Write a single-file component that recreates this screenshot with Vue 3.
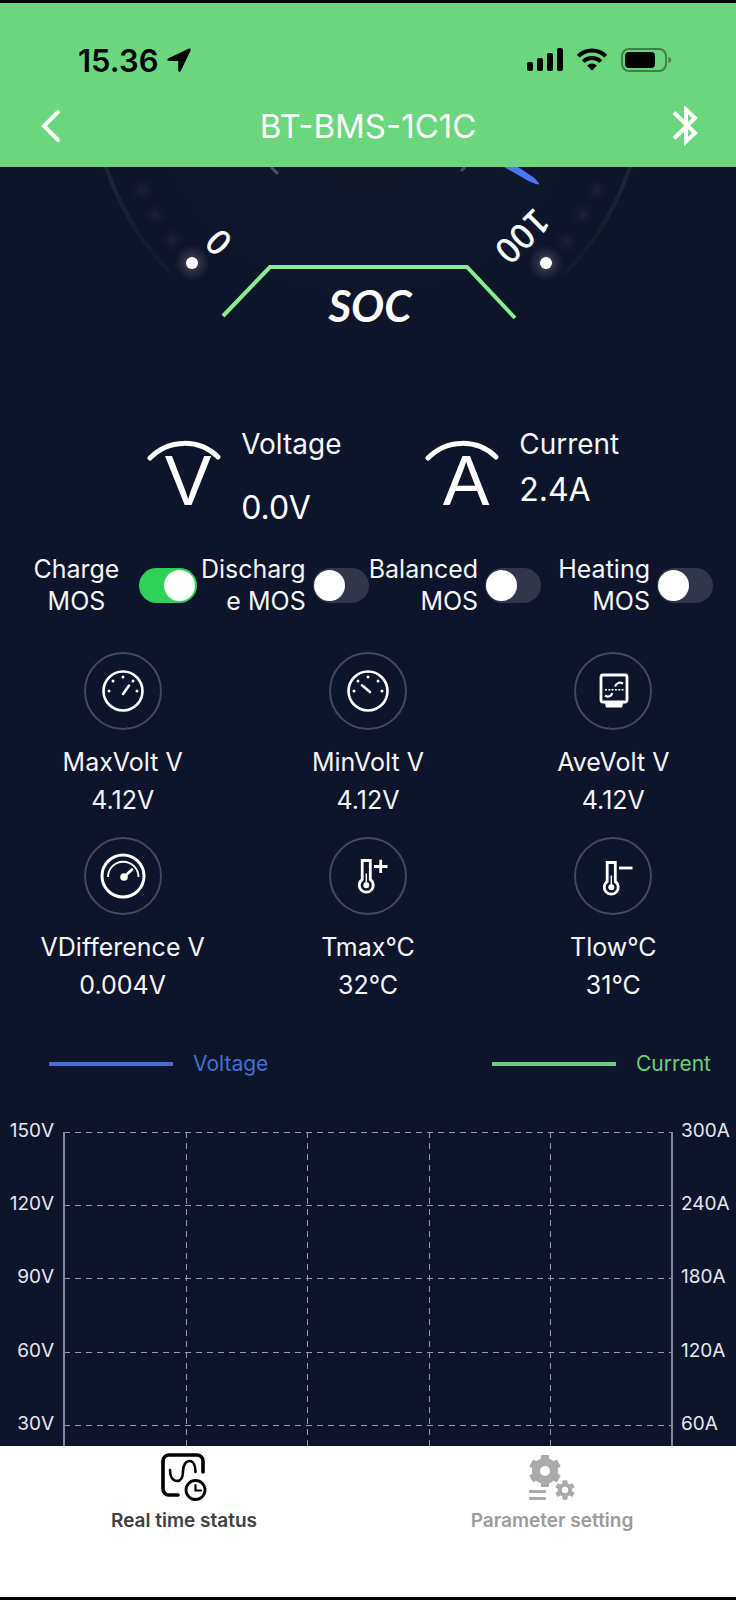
<script setup>
import { ref } from 'vue';

const switches = ref([
  { id: 'charge', label: 'Charge\nMOS', on: true },
  { id: 'discharge', label: 'Discharg\ne MOS', on: false },
  { id: 'balanced', label: 'Balanced\nMOS', on: false },
  { id: 'heating', label: 'Heating\nMOS', on: false }
]);

const stats = [
  { icon: 'max', title: 'MaxVolt V', value: '4.12V' },
  { icon: 'min', title: 'MinVolt V', value: '4.12V' },
  { icon: 'ave', title: 'AveVolt V', value: '4.12V' },
  { icon: 'diff', title: 'VDifference V', value: '0.004V' },
  { icon: 'tmax', title: 'Tmax°C', value: '32°C' },
  { icon: 'tlow', title: 'Tlow°C', value: '31°C' }
];

const tab = ref('status');

// chart geometry
const left = 64;
const right = 672;
const top = 23;
const bottom = 389;
const rows = [0, 1, 2, 3, 4].map(i => ({
  y: Math.round(top + i * (bottom - top) / 5),
  volt: 150 - i * 30 + 'V',
  amp: 300 - i * 60 + 'A'
}));
const cols = [1, 2, 3, 4].map(i => Math.round(left + i * (right - left) / 5));

const teeth = [0, 60, 120, 180, 240, 300];
</script>

<template>
  <div class="app">
    <header class="header">
      <div class="status-bar">
        <span class="time">15.36</span>
        <svg class="arrow" width="24" height="24" viewBox="0 0 24 24">
          <path d="M21.5 .7 1.6 10.2c-2 1-1.500 2.700.4 2.700h8.600q.6 0 .6.6v8.600c0 2 2 2.400 2.800.500L23.600 2.600C24.200 1 23 0 21.500.7z" />
        </svg>
        <div class="signals">
          <svg width="36" height="24" viewBox="0 0 36 24">
            <rect x="0" y="14" width="6" height="9" rx="2" />
            <rect x="10" y="10" width="6" height="13" rx="2" />
            <rect x="20" y="5" width="6" height="18" rx="2" />
            <rect x="30" y="0" width="6" height="23" rx="2" />
          </svg>
          <svg width="32" height="24" viewBox="0 0 32 24">
            <g fill="none" stroke="#000" stroke-width="4">
              <path d="M2.200 8.200a19.500 19.500 0 0 1 27.600 0" />
              <path d="M7.200 13.600a12.500 12.500 0 0 1 17.600 0" />
            </g>
            <path d="M11.200 17.400a7 7 0 0 1 9.600 0l-3.800 4.400q-1 1-2 0z" />
          </svg>
          <svg width="50" height="24" viewBox="0 0 50 24">
            <rect x="1" y="1" width="44" height="22" rx="7" fill="none" stroke="#000" stroke-opacity=".4" stroke-width="2" />
            <rect x="4" y="4" width="30" height="16" rx="4" />
            <path d="M47.500 8.500q2.500 1 2.500 3.500t-2.500 3.500z" fill-opacity=".45" />
          </svg>
        </div>
      </div>
      <div class="nav">
        <button class="nav-btn" type="button" aria-label="Back">
          <svg width="24" height="40" viewBox="0 0 24 40">
            <path d="M18 6 4 20l14 14" fill="none" stroke="#fff" stroke-width="4" stroke-linecap="round" />
          </svg>
        </button>
        <h1>BT-BMS-1C1C</h1>
        <button class="nav-btn" type="button" aria-label="Bluetooth">
          <svg width="26" height="40" viewBox="0 0 26 40">
            <path d="M2 6.500 23 27l-9 8.500V3.500L23 12 2 32.500" fill="none" stroke="#fff" stroke-width="4" />
          </svg>
        </button>
      </div>
    </header>

    <main class="content">
      <!-- lower part of the SOC dial, the rest is scrolled under the header -->
      <svg class="gauge" viewBox="0 167 736 261">
        <defs>
          <radialGradient id="glow">
            <stop offset="0" stop-color="#fff" stop-opacity=".3" />
            <stop offset=".5" stop-color="#fff" stop-opacity=".1" />
            <stop offset="1" stop-color="#fff" stop-opacity="0" />
          </radialGradient>
          <radialGradient id="face">
            <stop offset="0" stop-color="#13192b" />
            <stop offset=".8" stop-color="#10162a" />
            <stop offset="1" stop-color="#0e1429" />
          </radialGradient>
          <linearGradient id="rim" x1="0" y1="167" x2="0" y2="300" gradientUnits="userSpaceOnUse">
            <stop offset="0" stop-color="#1a2a2f" />
            <stop offset="1" stop-color="#0e1429" />
          </linearGradient>
        </defs>
        <circle cx="368" cy="80" r="276" fill="url(#face)" />
        <path d="M92 80a276 276 0 0 0 552 0" fill="none" stroke="url(#rim)" stroke-width="4" />
        <g fill="url(#glow)">
          <g opacity=".2">
            <circle cx="142" cy="190" r="13" />
            <circle cx="155" cy="215" r="13" />
            <circle cx="172" cy="240" r="13" />
            <circle cx="597" cy="190" r="13" />
            <circle cx="583" cy="215" r="13" />
            <circle cx="567" cy="241" r="13" />
          </g>
          <circle cx="192" cy="263" r="18" />
          <circle cx="546" cy="263" r="18" />
        </g>
        <circle cx="192" cy="263" r="6" fill="#fff" />
        <circle cx="546" cy="263" r="6" fill="#fff" />
        <path d="M271 167l7 7M465 167l-4 4" stroke="#4a4f60" stroke-width="3" />
        <path d="M504 167h14l15 10q5 4 6.500 7.500q-5-.5-10-3z" fill="#4a76fb" />
        <path d="M223 316 270 267H467L515 318" fill="none" stroke="#87ee8d" stroke-width="4" />
        <text class="mark" transform="translate(219 242) rotate(-135)" y="12">0</text>
        <text class="mark" transform="translate(522 236) rotate(135)" y="12">100</text>
        <text class="soc" x="370" y="322">SOC</text>
      </svg>

      <section class="meters">
        <div class="meter">
          <svg width="74" height="100" viewBox="0 0 74 100">
            <path d="M3 30a48 48 0 0 1 68-1" fill="none" stroke="#fff" stroke-width="5" stroke-linecap="round" />
            <text class="meter-letter" x="41" y="77">V</text>
          </svg>
          <div class="meter-text">
            <span class="meter-label">Voltage</span>
            <span class="meter-value low">0.0V</span>
          </div>
        </div>
        <div class="meter">
          <svg width="74" height="100" viewBox="0 0 74 100">
            <path d="M3 30a48 48 0 0 1 68-1" fill="none" stroke="#fff" stroke-width="5" stroke-linecap="round" />
            <text class="meter-letter" x="41" y="77">A</text>
          </svg>
          <div class="meter-text">
            <span class="meter-label">Current</span>
            <span class="meter-value">2.4A</span>
          </div>
        </div>
      </section>

      <section class="switches">
        <div v-for="item in switches" :key="item.id" class="switch">
          <label :for="item.id">{{ item.label }}</label>
          <input :id="item.id" type="checkbox" v-model="item.on">
        </div>
      </section>

      <section class="stats">
        <div v-for="item in stats" :key="item.icon" class="stat">
          <svg width="78" height="78" viewBox="-39 -39 78 78" fill="none" stroke="#fff">
            <circle r="38" stroke="#454a5c" stroke-width="2" />
            <g v-if="item.icon === 'max' || item.icon === 'min'">
              <circle r="19.500" stroke-width="2.600" />
              <g fill="#fff" stroke="none">
                <circle cx="-14" cy="0" r="1.500" />
                <circle cx="-10" cy="-10" r="1.500" />
                <circle cx="0" cy="-14" r="1.500" />
                <circle cx="10" cy="-10" r="1.500" />
                <circle cx="14" cy="0" r="1.500" />
              </g>
              <path :d="item.icon === 'max' ? 'M0 3 6-5.500' : 'M-6-5.700 2 1'" stroke-width="2.600" stroke-linecap="round" />
            </g>
            <g v-else-if="item.icon === 'ave'" stroke-width="2.800">
              <rect x="-12" y="-16" width="26" height="27" rx="2" />
              <path d="M-8.500 11H10.500L9 16.500H-7z" fill="#fff" stroke="none" />
              <path d="M-8-1.300H10.500" stroke-width="1.600" stroke-dasharray="2 1.300" />
              <path d="M-8 4.500C-4.500 6.500-1.500 5.500-.8 2M2-4.500C3.500-8.500 6.500-9 10-7.500" stroke-width="2.200" />
            </g>
            <g v-else-if="item.icon === 'diff'">
              <circle r="21" stroke-width="3" />
              <path d="M-15 1A15 15 0 1 1 15.500 1" stroke-width="1.800" />
              <circle cx="1" cy="1" r="3.800" fill="#fff" stroke="none" />
              <path d="M1 1 9-6.500" stroke-width="2.800" stroke-linecap="round" />
            </g>
            <g v-else :transform="item.icon === 'tlow' ? 'translate(0 2)' : ''" stroke-width="2.800">
              <path d="M-5.800 3.500V-15.500H2.300V3.500A7 7 0 1 1-5.800 3.500z" />
              <circle cx="-1.700" cy="9.300" r="3" fill="#fff" stroke="none" />
              <path d="M-1.700 9V-2.500" stroke-width="1.500" />
              <path v-if="item.icon === 'tmax'" d="M6-9.500H19.500M12.700-16.200V-3" />
              <path v-else d="M6-10H19.500" />
            </g>
          </svg>
          <span class="stat-title">{{ item.title }}</span>
          <span class="stat-value">{{ item.value }}</span>
        </div>
      </section>

      <div class="legend">
        <div class="legend-item voltage"><i></i>Voltage</div>
        <div class="legend-item current"><i></i>Current</div>
      </div>

      <svg class="chart" viewBox="0 0 736 389">
        <g stroke="#999ca8" stroke-dasharray="6 5" shape-rendering="crispEdges">
          <line v-for="row in rows" :key="row.y" :x1="left" :x2="right" :y1="row.y" :y2="row.y" />
          <line v-for="x in cols" :key="x" :x1="x" :x2="x" :y1="top" :y2="bottom" />
        </g>
        <path :d="`M${left} ${top}V${bottom}M${right} ${top}V${bottom}`" stroke="#858996" stroke-width="2" />
        <g v-for="row in rows" :key="row.volt" class="axis">
          <text :x="left - 10" :y="row.y + 5" text-anchor="end">{{ row.volt }}</text>
          <text :x="right + 9" :y="row.y + 5">{{ row.amp }}</text>
        </g>
      </svg>
    </main>

    <nav class="tabs">
      <button type="button" class="tab" :class="{ active: tab === 'status' }" @click="tab = 'status'">
        <svg width="48" height="50" viewBox="0 0 48 50" fill="none" stroke="#000" stroke-linecap="round">
          <path d="M43 20V9a6 6 0 0 0-6-6H9a6 6 0 0 0-6 6v28a6 6 0 0 0 6 6h9" stroke-width="3.600" />
          <path d="M10 18C10 25 13 29 17 29C21 29 23 25 23 19C23 13 26 9 29.500 9C33.500 9 35.500 14 35.500 20" stroke-width="2.600" />
          <circle cx="35.500" cy="38" r="9.500" stroke-width="2.800" />
          <path d="M35.500 33v5.500h5.500" stroke-width="2.200" />
        </svg>
        <span>Real time status</span>
      </button>
      <button type="button" class="tab" :class="{ active: tab === 'setting' }" @click="tab = 'setting'">
        <svg width="48" height="50" viewBox="0 0 48 50" fill="#aaa">
          <g transform="translate(17 19)">
            <circle r="9" fill="none" stroke="#aaa" stroke-width="8" />
            <rect v-for="deg in teeth" :key="deg" x="-4" y="-16" width="8" height="6" rx="1" :transform="`rotate(${deg})`" />
          </g>
          <g transform="translate(37 38)">
            <circle r="5.200" fill="none" stroke="#aaa" stroke-width="4" />
            <rect v-for="deg in teeth" :key="deg" x="-2.500" y="-9.800" width="5" height="4" rx="1" :transform="`rotate(${deg})`" />
          </g>
          <rect x="1" y="38" width="17" height="3" rx="1" />
          <rect x="1" y="45" width="17" height="3" rx="1" />
        </svg>
        <span>Parameter setting</span>
      </button>
    </nav>
  </div>
</template>

<style>
  body {
    margin: 0;
    background: #0e1429;
  }
</style>

<style scoped>
  .app {
    display: flex;
    flex-direction: column;
    height: 100vh;
    box-sizing: border-box;
    border-top: 3px solid #000;
    border-bottom: 3px solid #000;
    background: #0e1429;
    color: #f4f5f9;
    font-family: Inter, "Liberation Sans", sans-serif;
  }
  svg {
    display: block;
  }
  button {
    border: 0;
    padding: 0;
    background: none;
    font-family: inherit;
    cursor: pointer;
  }
  .header {
    flex: none;
    background: #6cd67e;
  }
  .status-bar {
    display: flex;
    align-items: center;
    height: 40px;
    padding: 37px 65px 5px 78px;
    color: #000;
  }
  .time {
    font-size: 31px;
    font-weight: 600;
  }
  .arrow {
    margin-left: 8px;
  }
  .signals {
    display: flex;
    gap: 13px;
    margin-left: auto;
  }
  .nav {
    display: flex;
    align-items: center;
    justify-content: space-between;
    height: 82px;
    padding: 0 38px 0 40px;
  }
  h1 {
    margin: 0;
    color: #fff;
    font-size: 33px;
    font-weight: 400;
  }
  .content {
    flex: 1;
    min-height: 0;
    overflow: hidden;
  }
  .gauge,
  .chart {
    width: 100%;
  }
  .mark {
    fill: #fff;
    font-family: "Noto Sans CJK SC", sans-serif;
    font-size: 35px;
    font-weight: 500;
    text-anchor: middle;
  }
  .soc {
    fill: #fff;
    font-family: Lato, sans-serif;
    font-size: 44px;
    font-style: italic;
    font-weight: 700;
    text-anchor: middle;
  }
  .meters {
    display: grid;
    grid-template-columns: repeat(2, 278px);
    padding-left: 20%;
  }
  .meter {
    display: flex;
    gap: 20px;
  }
  .meter-letter {
    fill: #fff;
    font-family: "Liberation Sans", sans-serif;
    font-size: 70px;
    text-anchor: middle;
  }
  .meter-text {
    display: flex;
    flex-direction: column;
    height: 100px;
  }
  .meter-label {
    font-size: 28px;
    line-height: 32px;
  }
  .meter-value {
    margin-top: 10px;
    color: #fff;
    font-size: 32px;
    line-height: 40px;
  }
  .meter-value.low {
    margin-top: 28px;
  }
  .switches {
    display: grid;
    grid-template-columns: repeat(4, 1fr);
    margin-top: 25px;
    padding: 0 23px 0 25px;
  }
  .switch {
    display: flex;
    align-items: center;
    gap: 7px;
  }
  .switch label {
    flex: 1;
    min-width: 0;
    display: flex;
    justify-content: flex-end;
    font-size: 25px;
    line-height: 32px;
    text-align: right;
    white-space: pre;
  }
  .switch:first-child label {
    justify-content: center;
    padding-right: 4px;
    text-align: center;
  }
  .switch input {
    appearance: none;
    flex: none;
    display: flex;
    width: 56px;
    height: 35px;
    margin: 0;
    padding: 2px 1px;
    box-sizing: border-box;
    border-radius: 18px;
    background: #323648;
  }
  .switch input::before {
    content: "";
    width: 31px;
    height: 31px;
    border-radius: 50%;
    background: #fff;
  }
  .switch input:checked {
    justify-content: flex-end;
    width: 58px;
    padding: 2px;
    background: #30d158;
  }
  .stats {
    display: grid;
    grid-template-columns: repeat(3, 1fr);
    row-gap: 18px;
    margin-top: 35px;
  }
  .stat {
    display: flex;
    flex-direction: column;
    align-items: center;
    font-size: 25px;
    line-height: 38px;
  }
  .stat-title {
    margin-top: 13px;
  }
  .legend {
    display: flex;
    justify-content: space-between;
    margin-top: 48px;
    padding: 0 25px 0 49px;
    font-size: 21px;
    line-height: 24px;
  }
  .legend-item {
    display: flex;
    align-items: center;
    gap: 20px;
  }
  .legend-item i {
    width: 124px;
    height: 4px;
    background: currentColor;
  }
  .voltage {
    color: #4470d3;
  }
  .current {
    color: #6fce7e;
  }
  .chart {
    margin-top: 33px;
  }
  .axis {
    fill: #e6e8ef;
    font-size: 19px;
  }
  .tabs {
    flex: none;
    display: grid;
    grid-template-columns: 1fr 1fr;
    height: 151px;
    background: #fff;
  }
  .tab {
    display: flex;
    flex-direction: column;
    align-items: center;
    padding-top: 6px;
    color: #9c9c9c;
    font-size: 19px;
    font-weight: 600;
    line-height: 24px;
  }
  .tab span {
    margin-top: 7px;
  }
  .tab.active {
    color: #404040;
  }
</style>
